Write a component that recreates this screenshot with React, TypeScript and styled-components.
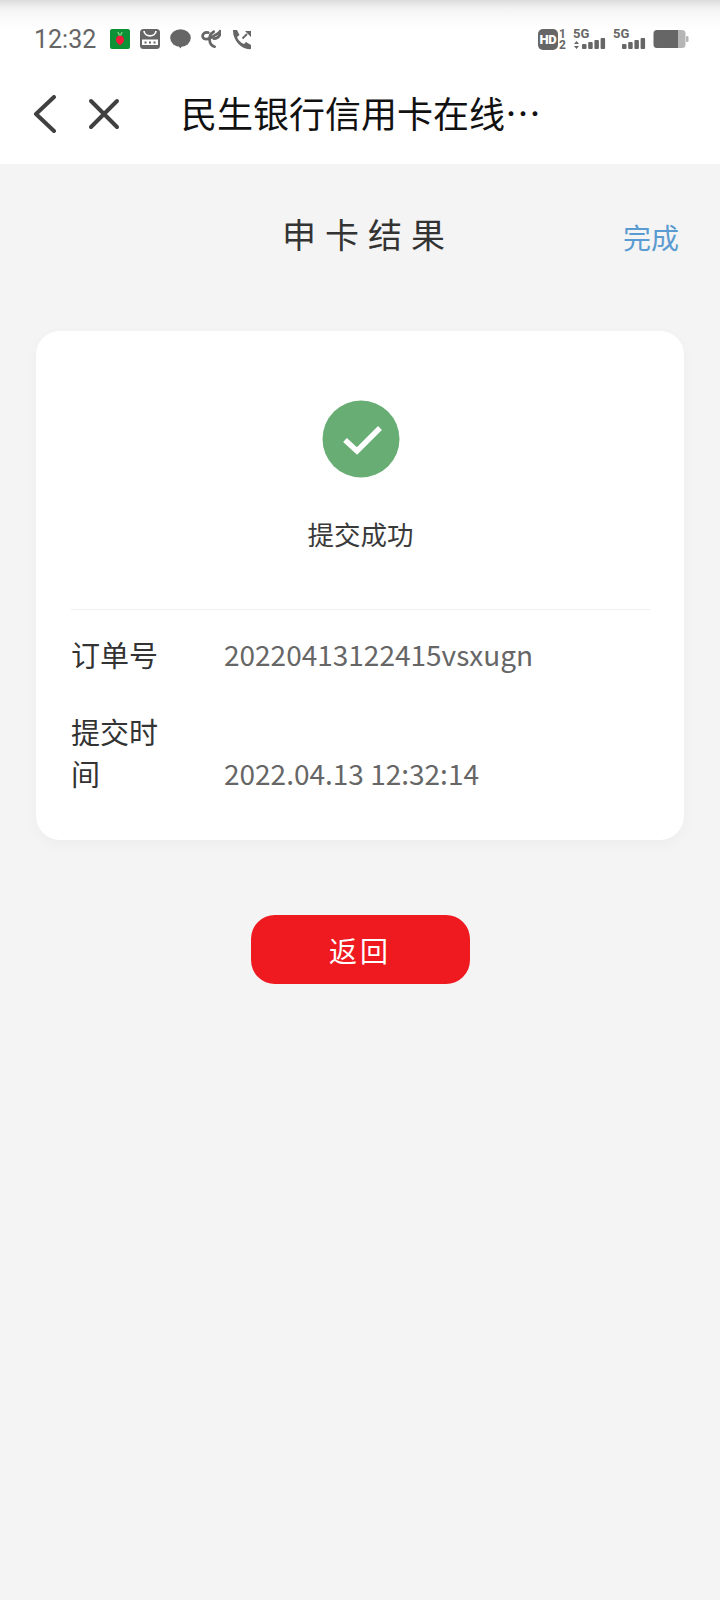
import * as React from 'react';
import styled, { createGlobalStyle } from 'styled-components';

const GlobalStyle = createGlobalStyle`
  html, body {
    margin: 0;
    padding: 0;
    background: #f4f4f4;
  }
  body {
    font-family: "Noto Sans CJK SC", "Noto Sans", sans-serif;
  }
`;

const Page = styled.div`
  width: 720px;
  height: 1600px;
  background: #f4f4f4;
  overflow: hidden;
`;

const Top = styled.div`
  height: 164px;
  display: flex;
  flex-direction: column;
  background: linear-gradient(#dcdcdc 0, #f4f4f4 9px, #fafafa 18px, #fff 30px);
`;

const StatusBar = styled.div`
  height: 72px;
  flex: none;
  display: flex;
  align-items: center;
  justify-content: space-between;
  padding: 6px 31px 0 34px;
  box-sizing: border-box;
`;

const StatusGroup = styled.div`
  display: flex;
  align-items: center;
  gap: ${(p: { $gap: number }) => p.$gap}px;
`;

const Clock = styled.span`
  font-family: Roboto, sans-serif;
  font-size: 25px;
  color: #666;
  margin-right: 4px;
  line-height: 1;
`;

const HdGroup = styled.div`
  display: flex;
  width: 28px;
  height: 21px;
  justify-content: space-between;
`;

const HdBadge = styled.span`
  display: flex;
  align-items: center;
  justify-content: center;
  width: 20px;
  border-radius: 5px;
  background: #666;
  color: #fff;
  font-family: Roboto, sans-serif;
  font-size: 13px;
  font-weight: 900;
  letter-spacing: -0.3px;
`;

const SimSlots = styled.span`
  display: flex;
  flex-direction: column;
  justify-content: space-between;
  color: #666;
  font-family: Roboto, sans-serif;
  font-size: 12px;
  font-weight: 700;
  line-height: 10px;
`;

const Signal = styled.div`
  width: 33px;
  height: 21px;
  display: flex;
  flex-direction: column;
`;

const SignalLabel = styled.span`
  height: 9px;
  color: #666;
  font-family: Roboto, sans-serif;
  font-size: 13px;
  font-weight: 700;
  line-height: 9px;
`;

const NavBar = styled.div`
  flex: 1;
  display: flex;
  align-items: center;
  padding: 0 0 8px 33px;
`;

const NavIcon = styled.svg`
  display: block;
  flex: none;
  margin-right: ${(p: { $space: number }) => p.$space}px;
`;

const NavTitle = styled.span`
  margin-bottom: 4px;
  font-size: 36px;
  color: #111;
  line-height: 1;
  white-space: nowrap;
`;

const TitleRow = styled.div`
  display: grid;
  grid-template-columns: 1fr auto 1fr;
  align-items: center;
  padding: 42px 41px 0;
`;

const PageTitle = styled.h1`
  grid-column: 2;
  margin: 0;
  padding-left: 16px;
  font-size: 34px;
  font-weight: 400;
  line-height: 56px;
  letter-spacing: 9px;
  color: #333;
`;

const DoneLink = styled.a`
  justify-self: end;
  font-size: 28px;
  line-height: 40px;
  padding-top: 6px;
  color: #5a9bd1;
`;

const Card = styled.div`
  margin: 69px 36px 0;
  height: 509px;
  box-sizing: border-box;
  padding: 69px 34px 0 35px;
  background: #fff;
  border-radius: 24px;
  box-shadow: 0 4px 14px rgba(0, 0, 0, 0.03);
`;

const ResultBlock = styled.div`
  display: flex;
  flex-direction: column;
  align-items: center;
  height: 210px;
  box-sizing: border-box;
  border-bottom: 1px solid #f0f0f0;
`;

const ResultText = styled.div`
  margin-top: 35px;
  font-size: 26.5px;
  line-height: 42px;
  color: #3a3a3a;
`;

const InfoList = styled.div`
  padding-top: 23px;
  display: flex;
  flex-direction: column;
  gap: 35px;
`;

const InfoRow = styled.div`
  display: flex;
  align-items: flex-end;
`;

const InfoLabel = styled.div`
  width: 100px;
  margin-right: 53px;
  font-size: 29px;
  line-height: 42px;
  color: #333;
`;

const InfoValue = styled.div`
  font-size: 28px;
  line-height: 42px;
  color: #666;
`;

const ReturnButton = styled.button`
  display: block;
  width: 219px;
  height: 69px;
  margin: 75px auto 0;
  padding: 0;
  border: 0;
  border-radius: 24px;
  background: #ee1a20;
  color: #fff;
  font-family: inherit;
  font-size: 28px;
  letter-spacing: 3px;
`;

function AppBadge() {
  return (
    <svg width="20" height="20" viewBox="0 0 20 20">
      <rect width="20" height="20" rx="2" fill="#0c9136" />
      <path d="M10 6.500c2.500 0 4.500 2 4 5-.5 2-3 4.500-4 4.500s-3.500-2.500-4-4.500c-.5-3 1.500-5 4-5z" fill="#ee1c3a" />
      <path d="M8 3 9.500 6.500M12 3 10.500 6.500" stroke="#7bd47f" strokeWidth="1.400" />
    </svg>
  );
}

function MailIcon() {
  return (
    <svg width="20" height="20" viewBox="0 0 20 20">
      <rect width="20" height="20" rx="3.500" fill="#666" />
      <path d="M4 2c.5 6.500 11.500 6.500 12 0" fill="none" stroke="#fff" strokeWidth="1.700" />
      <rect x="2" y="10.500" width="16" height="5.500" fill="#fff" />
      <path d="M4.500 13.500h2M9 13.500h2M13.500 13.500h2" stroke="#666" strokeWidth="2" />
    </svg>
  );
}

function BubbleIcon() {
  return (
    <svg width="21" height="20" viewBox="0 0 21 20">
      <ellipse cx="10.500" cy="9" rx="10.300" ry="8.800" fill="#666" />
      <path d="M7 15l3.500 4.500 2-3.500z" fill="#666" />
    </svg>
  );
}

function TelecomIcon() {
  return (
    <svg width="20" height="20" viewBox="0 0 22 20" fill="none" stroke="#666" strokeWidth="3" strokeLinecap="round">
      <path d="M8 3C4 2 1 5 2 8c1 3 6 3 10 0 4-3 8-4 9-6.500" />
      <path d="M14 2C10 4 8 9 10 14c1 3 3 4 5 4.500" />
      <path d="M14 9.500c3 0 6-2 7-5" />
    </svg>
  );
}

function CallIcon() {
  return (
    <svg width="21" height="21" viewBox="0 0 21 21">
      <path d="M2 1h4l2.500 5L6 8c1 3 4 6 7 7l2-2 5 3v4C12 21.500 1.500 12 2 1z" fill="#666" />
      <path d="M11.500 9.500 16 5" stroke="#666" strokeWidth="1.800" fill="none" />
      <path d="M14 2h6v6z" fill="#666" />
    </svg>
  );
}

function SignalBars({ arrows }: { arrows?: boolean }) {
  return (
    <svg width="33" height="12" viewBox="0 0 33 12">
      {arrows && <path d="M1 6l2.500-3 2.500 3zM1 8h5l-2.500 3z" fill="#666" />}
      {[0, 1, 2, 3].map((i) => (
        <rect key={i} x={9 + i * 6.200} y={11 - (5 + i * 2)} width="4.500" height={5 + i * 2} rx="1" fill="#666" />
      ))}
    </svg>
  );
}

function BatteryIcon() {
  return (
    <svg width="36" height="20" viewBox="0 0 36 20">
      <path d="M4 1h21v18H4a3.500 3.500 0 0 1-3.500-3.500v-11A3.500 3.500 0 0 1 4 1z" fill="#666" />
      <path d="M25 1h4a3.500 3.500 0 0 1 3.500 3.500v11A3.500 3.500 0 0 1 29 19h-4z" fill="#b5b5b5" />
      <rect x="33" y="7" width="2.500" height="6" rx="1" fill="#b5b5b5" />
    </svg>
  );
}

function SuccessIcon() {
  return (
    <svg width="78" height="78" viewBox="0 0 78 78">
      <circle cx="39" cy="39" r="38.500" fill="#67ad74" />
      <path d="M23 40 35 51 58 28" fill="none" stroke="#fff" strokeWidth="5.500" />
    </svg>
  );
}

export default function App() {
  return (
    <Page>
      <GlobalStyle />
      <Top>
        <StatusBar>
          <StatusGroup $gap={10}>
            <Clock>12:32</Clock>
            <AppBadge />
            <MailIcon />
            <BubbleIcon />
            <TelecomIcon />
            <CallIcon />
          </StatusGroup>
          <StatusGroup $gap={7}>
            <HdGroup>
              <HdBadge>HD</HdBadge>
              <SimSlots>
                <span>1</span>
                <span>2</span>
              </SimSlots>
            </HdGroup>
            <Signal>
              <SignalLabel>5G</SignalLabel>
              <SignalBars arrows />
            </Signal>
            <Signal>
              <SignalLabel>5G</SignalLabel>
              <SignalBars />
            </Signal>
            <BatteryIcon />
          </StatusGroup>
        </StatusBar>
        <NavBar>
          <NavIcon as="svg" $space={30} width="24" height="38" viewBox="0 0 24 38" fill="none" stroke="#404040" strokeWidth="4" strokeLinecap="round" strokeLinejoin="round">
            <path d="M21 2 3 19l18 17" />
          </NavIcon>
          <NavIcon as="svg" $space={60} width="34" height="34" viewBox="0 0 34 34" fill="none" stroke="#404040" strokeWidth="4" strokeLinecap="round">
            <path d="M4 4l26 26M30 4 4 30" />
          </NavIcon>
          <NavTitle>民生银行信用卡在线…</NavTitle>
        </NavBar>
      </Top>

      <TitleRow>
        <PageTitle>申卡结果</PageTitle>
        <DoneLink>完成</DoneLink>
      </TitleRow>

      <Card>
        <ResultBlock>
          <SuccessIcon />
          <ResultText>提交成功</ResultText>
        </ResultBlock>
        <InfoList>
          <InfoRow>
            <InfoLabel>订单号</InfoLabel>
            <InfoValue>20220413122415vsxugn</InfoValue>
          </InfoRow>
          <InfoRow>
            <InfoLabel>提交时间</InfoLabel>
            <InfoValue>2022.04.13 12:32:14</InfoValue>
          </InfoRow>
        </InfoList>
      </Card>

      <ReturnButton>返回</ReturnButton>
    </Page>
  );
}
